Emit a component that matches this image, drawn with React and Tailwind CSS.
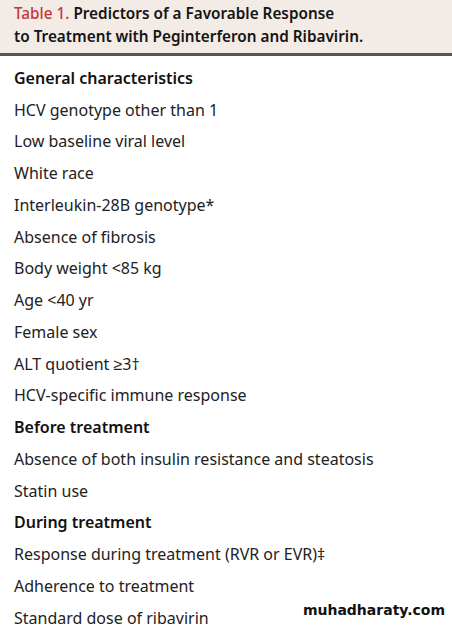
const rows = [
  { t: "General characteristics", b: true },
  { t: "HCV genotype other than 1" },
  { t: "Low baseline viral level" },
  { t: "White race" },
  { t: "Interleukin-28B genotype*" },
  { t: "Absence of fibrosis" },
  { t: "Body weight <85 kg" },
  { t: "Age <40 yr" },
  { t: "Female sex" },
  { t: "ALT quotient ≥3†" },
  { t: "HCV-specific immune response" },
  { t: "Before treatment", b: true },
  { t: "Absence of both insulin resistance and steatosis" },
  { t: "Statin use" },
  { t: "During treatment", b: true },
  { t: "Response during treatment (RVR or EVR)‡" },
  { t: "Adherence to treatment" },
  { t: "Standard dose of ribavirin" },
];

export default function App() {
  return (
    <div
      className="relative w-[452px] h-[626px] overflow-hidden bg-white text-[#1a1a1a]"
      style={{ fontFamily: '"Noto Sans", sans-serif' }}
    >
      <div className="bg-[#f2ebe6] px-[14px] pt-[2px] h-[51px] border-b-[3px] border-[#5b5551] box-content">
        <div className="text-[15.3px] leading-[23px] font-semibold text-[#141414]">
          <span className="text-[#c8363a] font-medium">Table 1.</span> Predictors of a
          Favorable Response
          <br />
          to Treatment with Peginterferon and Ribavirin.
        </div>
      </div>
      <div className="pt-[6px]">
        {rows.map((r, i) => (
          <div
            key={i}
            className={`h-[31.75px] flex items-center px-[14px] text-[16px] ${
              r.b ? "font-semibold text-[#111]" : "text-[#222]"
            }`}
          >
            {r.t}
          </div>
        ))}
      </div>
      <div
        className="absolute right-[7px] bottom-[5px] text-[14px] font-bold text-[#111]"
        style={{ fontFamily: '"DejaVu Sans", sans-serif' }}
      >
        muhadharaty.com
      </div>
    </div>
  );
}
